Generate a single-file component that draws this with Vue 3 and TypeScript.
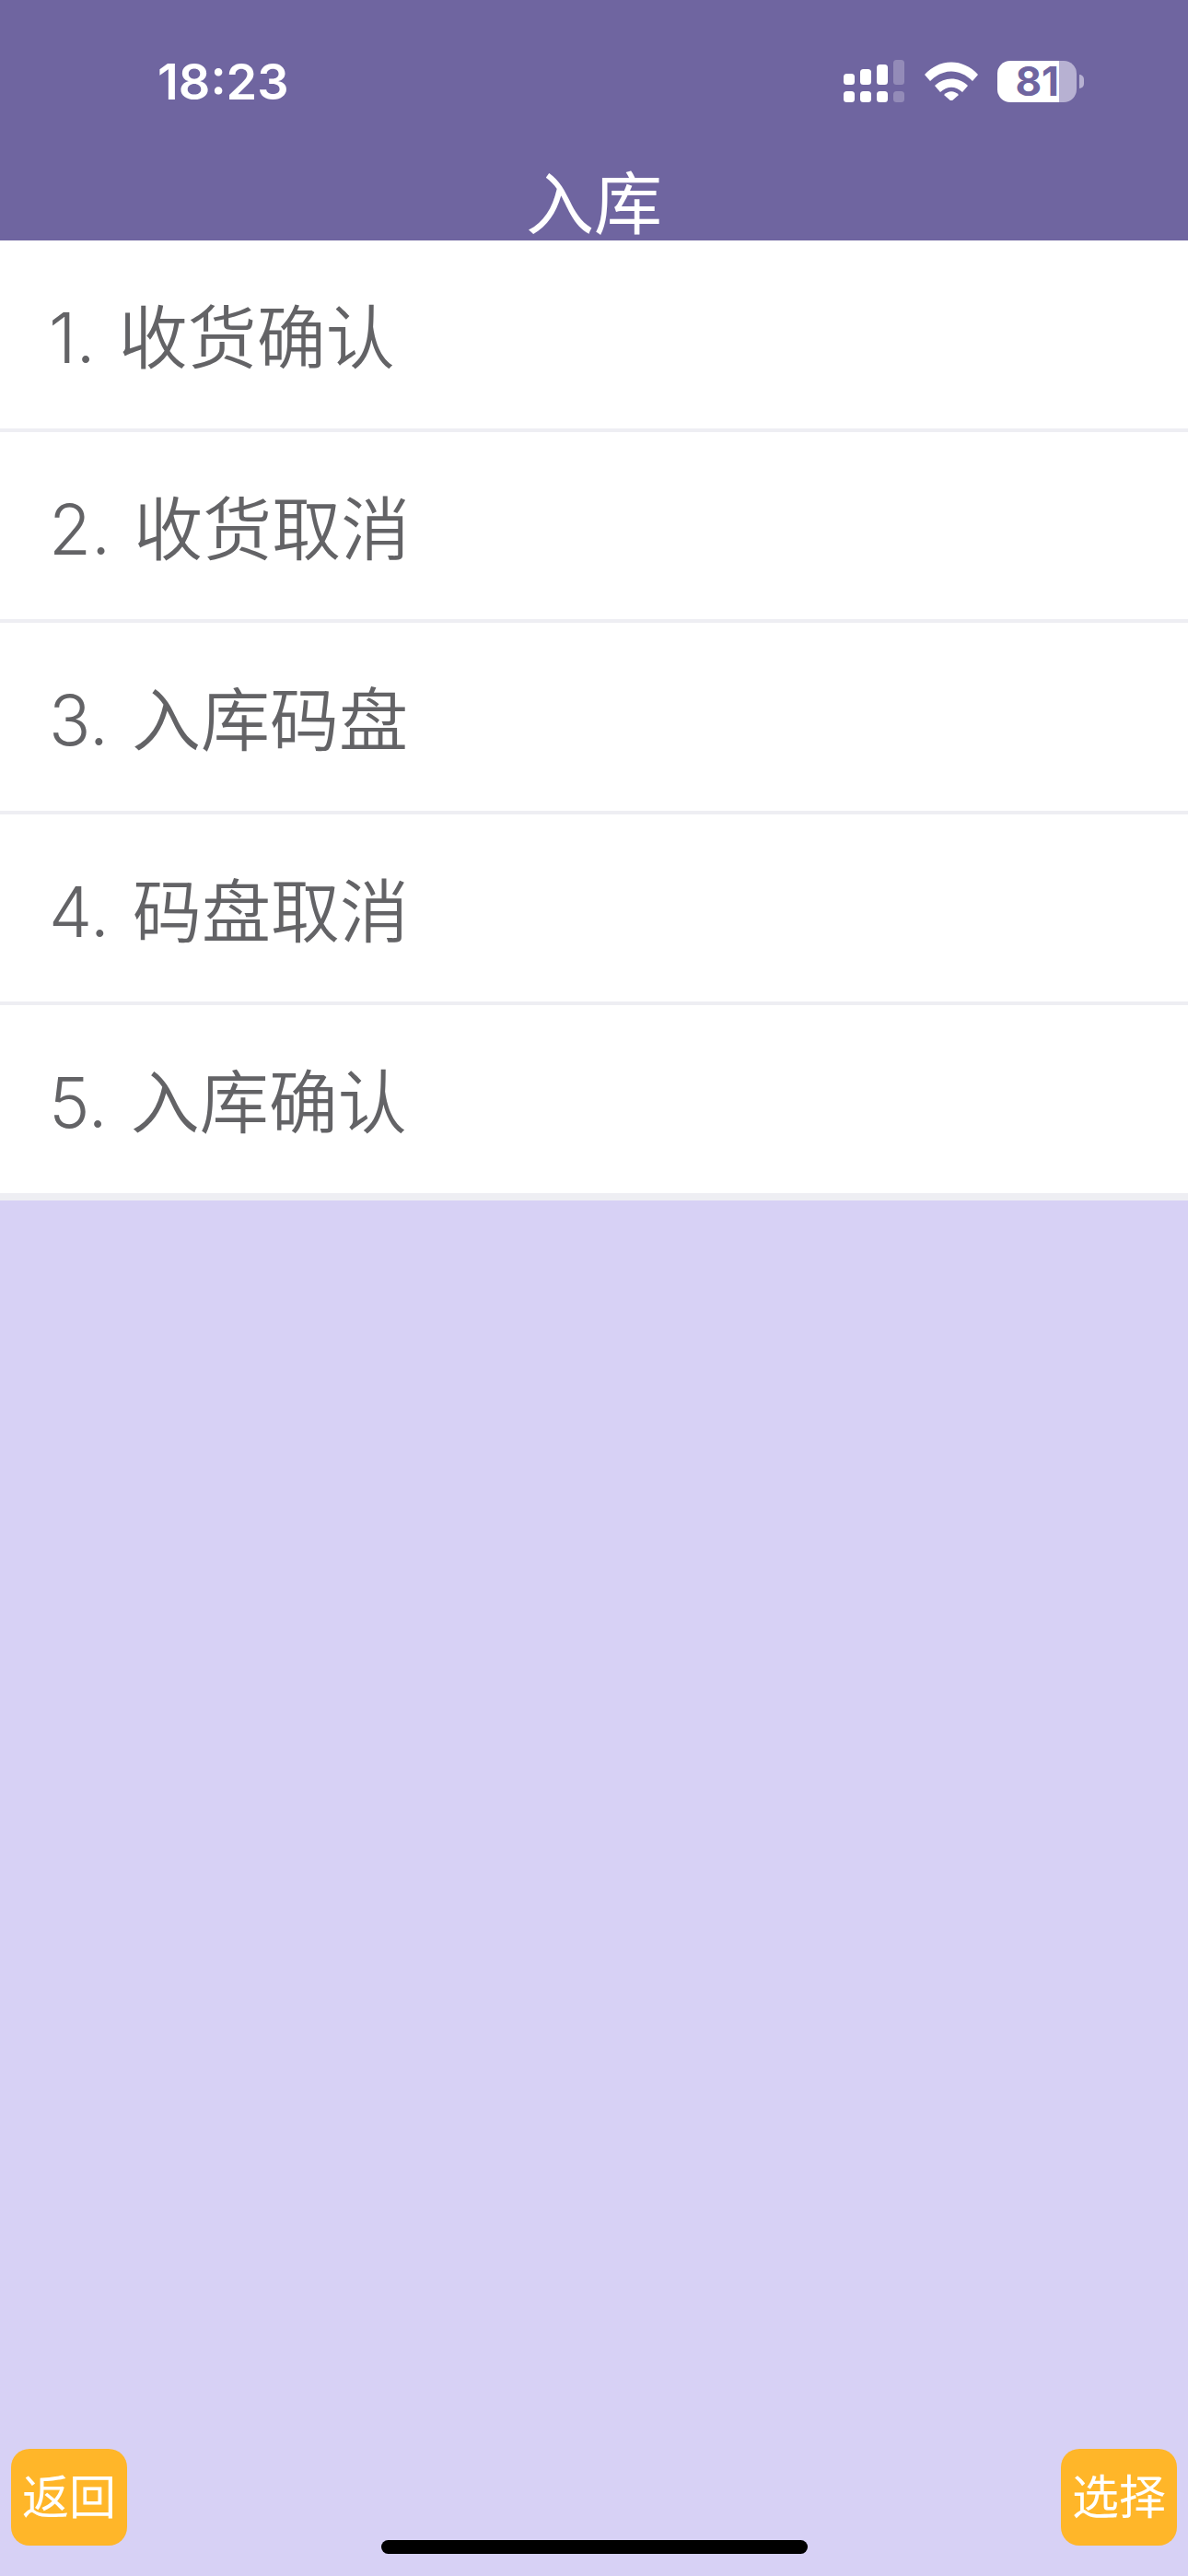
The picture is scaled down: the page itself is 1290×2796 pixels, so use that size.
<script setup lang="ts">
const items: string[] = ['1. 收货确认', '2. 收货取消', '3. 入库码盘', '4. 码盘取消', '5. 入库确认']
</script>

<template>
  <div class="page">
    <header class="header">
      <div class="status">
        <span class="time">18:23</span>
        <div class="icons">
          <svg class="signal" width="68" height="46" viewBox="0 0 68 46">
            <g fill="#fff">
              <rect x="0" y="15" width="12" height="12" rx="3.5" />
              <rect x="18" y="10" width="12" height="17" rx="3.5" />
              <rect x="36" y="5" width="12" height="22" rx="3.5" />
              <rect x="0" y="34" width="12" height="12" rx="3.5" />
              <rect x="18" y="34" width="12" height="12" rx="3.5" />
              <rect x="36" y="34" width="12" height="12" rx="3.5" />
            </g>
            <g fill="#fff" fill-opacity="0.25">
              <rect x="54" y="0" width="12" height="27" rx="3.5" />
              <rect x="54" y="34" width="12" height="12" rx="3.5" />
            </g>
          </svg>
          <svg class="wifi" width="58" height="42" viewBox="0 0 58 42">
            <path d="M0 14 C16 -4 42 -4 58 14 L52 21 C38 7 20 7 6 21 Z" fill="#fff" />
            <path d="M11 26 C21 16 37 16 47 26 L41 33 C33 26 25 26 17 33 Z" fill="#fff" />
            <path d="M21 36 C26 31 32 31 37 36 L29 43 Z" fill="#fff" />
          </svg>
          <div class="battery">
            <div class="cell"><span class="pct">81</span></div>
            <span class="nub"></span>
          </div>
        </div>
      </div>
      <h1 class="title">入库</h1>
    </header>

    <ul class="list">
      <li v-for="item in items" :key="item" class="row">{{ item }}</li>
    </ul>

    <footer class="footer">
      <button class="btn" type="button">返回</button>
      <button class="btn" type="button">选择</button>
    </footer>
    <span class="home"></span>
  </div>
</template>

<style>
html, body { margin: 0; padding: 0; }
</style>

<style scoped>
.page {
  position: relative;
  width: 1290px;
  height: 2796px;
  display: flex;
  flex-direction: column;
  background: #d7d1f5;
  font-family: "Inter", "Noto Sans CJK SC", sans-serif;
  overflow: hidden;
}
.header {
  height: 261px;
  background: #6f65a0;
  color: #fff;
  flex: none;
}
.status {
  height: 176px;
  display: flex;
  justify-content: space-between;
  align-items: center;
  padding: 0 113px 0 171px;
  box-sizing: border-box;
}
.time {
  font-family: Inter, sans-serif;
  font-weight: 600;
  font-size: 54px;
}
.icons {
  display: flex;
  align-items: center;
  gap: 21px;
}
.signal { margin-right: -1px; }
.battery {
  display: flex;
  align-items: center;
  gap: 3px;
}
.cell {
  width: 86px;
  height: 45px;
  border-radius: 14px;
  background: linear-gradient(to right, #fff 0 78%, #b7b1d2 78% 100%);
  display: flex;
  align-items: center;
  justify-content: flex-end;
  padding-right: 19px;
  box-sizing: border-box;
}
.pct {
  font-family: Inter, sans-serif;
  font-weight: 700;
  font-size: 44px;
  color: #6f65a0;
  line-height: 1;
}
.nub {
  width: 5px;
  height: 15px;
  background: #b7b1d2;
  border-radius: 0 8px 8px 0;
}
.title {
  margin: 0;
  padding-top: 5px;
  font-size: 74px;
  font-weight: 400;
  line-height: 80px;
  text-align: center;
}
.list {
  list-style: none;
  margin: 0;
  padding: 0 0 4px;
  background: #eeeef3;
  flex: none;
}
.row {
  height: 203.5px;
  margin-bottom: 4px;
  background: #fff;
  color: #636366;
  font-size: 75px;
  font-weight: 350;
  line-height: 211px;
  padding-left: 53px;
  word-spacing: 4px;
}
.footer {
  margin-top: auto;
  padding: 0 12px 33px;
  display: flex;
  justify-content: space-between;
}
.btn {
  width: 126px;
  height: 105px;
  border: 0;
  padding: 0 0 7px;
  border-radius: 20px;
  background: #ffb629;
  color: #fff;
  font-family: inherit;
  font-size: 51px;
  white-space: nowrap;
}
.home {
  position: absolute;
  left: 414px;
  bottom: 24px;
  width: 463px;
  height: 15px;
  border-radius: 8px;
  background: #000;
}
</style>
